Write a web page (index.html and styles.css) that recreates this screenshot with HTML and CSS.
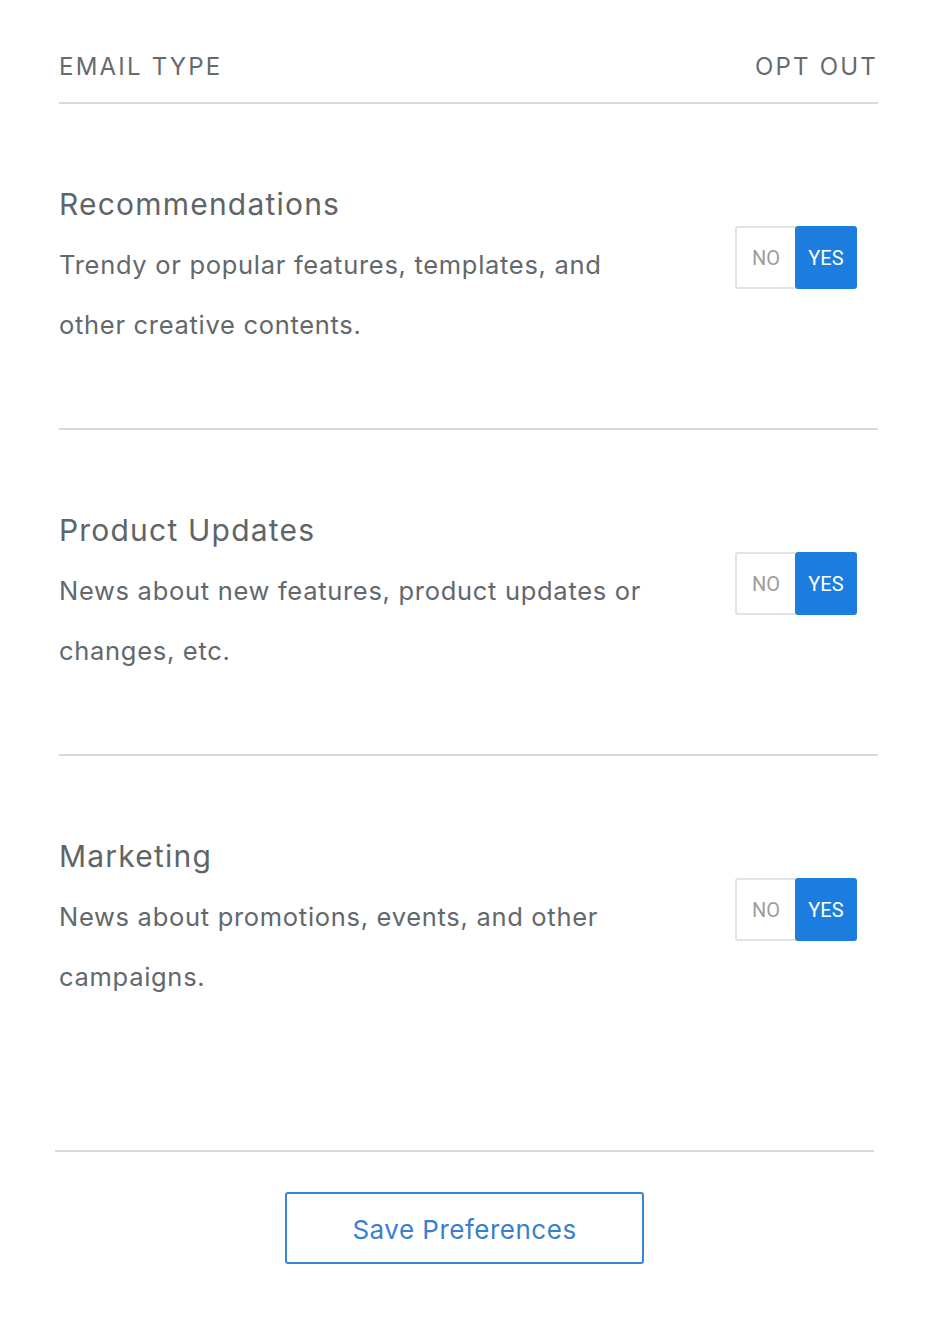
FILE: index.html
```html
<!DOCTYPE html>
<html>
<head>
<meta charset="utf-8">
<link rel="stylesheet" href="styles.css">
</head>
<body>
<div class="prefs">
  <div class="head">
    <span class="head-label">EMAIL TYPE</span>
    <span class="head-label">OPT OUT</span>
  </div>
  <div class="row">
    <div class="info">
      <div class="title">Recommendations</div>
      <div class="desc">Trendy or popular features, templates, and<br>other creative contents.</div>
    </div>
    <div class="toggle"><span class="opt no">NO</span><span class="opt yes">YES</span></div>
  </div>
  <div class="row">
    <div class="info">
      <div class="title">Product Updates</div>
      <div class="desc">News about new features, product updates or<br>changes, etc.</div>
    </div>
    <div class="toggle"><span class="opt no">NO</span><span class="opt yes">YES</span></div>
  </div>
  <div class="row last">
    <div class="info">
      <div class="title">Marketing</div>
      <div class="desc">News about promotions, events, and other<br>campaigns.</div>
    </div>
    <div class="toggle"><span class="opt no">NO</span><span class="opt yes">YES</span></div>
  </div>
</div>
<div class="footer">
  <button class="save">Save Preferences</button>
</div>
</body>
</html>
```

FILE: styles.css
```css
html, body {
  margin: 0;
  padding: 0;
  background: #ffffff;
}
body {
  font-family: "Inter", "Noto Sans", sans-serif;
  color: #62686c;
}
.prefs {
  margin-left: 59px;
  width: 819px;
}
.head {
  display: flex;
  justify-content: space-between;
  padding-top: 52px;
  padding-bottom: 20px;
  border-bottom: 2px solid #dadada;
}
.head-label {
  font-size: 24px;
  line-height: 30px;
  letter-spacing: 2.2px;
  color: #656b6f;
}
.row {
  display: flex;
  justify-content: space-between;
  align-items: flex-start;
  padding-top: 80px;
  padding-bottom: 73px;
  border-bottom: 2px solid #dadada;
}
.row.last {
  border-bottom: none;
  padding-bottom: 143px;
}
.title {
  font-size: 30px;
  line-height: 40px;
  letter-spacing: 1.2px;
  color: #5e6468;
  margin-bottom: 11px;
}
.desc {
  font-size: 25.5px;
  line-height: 60px;
  letter-spacing: 0.7px;
  color: #62686c;
}
.toggle {
  display: flex;
  margin-top: 42px;
  margin-right: 21px;
  height: 63px;
  font-family: "Roboto", "Liberation Sans", sans-serif;
  font-size: 20px;
}
.opt {
  display: flex;
  align-items: center;
  justify-content: center;
  box-sizing: border-box;
}
.no {
  width: 60px;
  color: #9d9d9d;
  border: 2px solid #e2e2e2;
  border-right: none;
  border-radius: 3px 0 0 3px;
  background: #fff;
}
.yes {
  width: 62px;
  color: #ffffff;
  background: #1d7ddf;
  border-radius: 3px;
}
.footer {
  margin-left: 55px;
  width: 819px;
  border-top: 2px solid #dadada;
  display: flex;
  justify-content: center;
  padding-top: 40px;
}
.save {
  width: 359px;
  height: 72px;
  background: #fff;
  border: 2px solid #3c85d6;
  border-radius: 3px;
  color: #3a7ed1;
  font-family: "Inter", "Noto Sans", sans-serif;
  font-size: 26px;
  letter-spacing: 0.5px;
  padding: 2px 0 0 0;
}
```
